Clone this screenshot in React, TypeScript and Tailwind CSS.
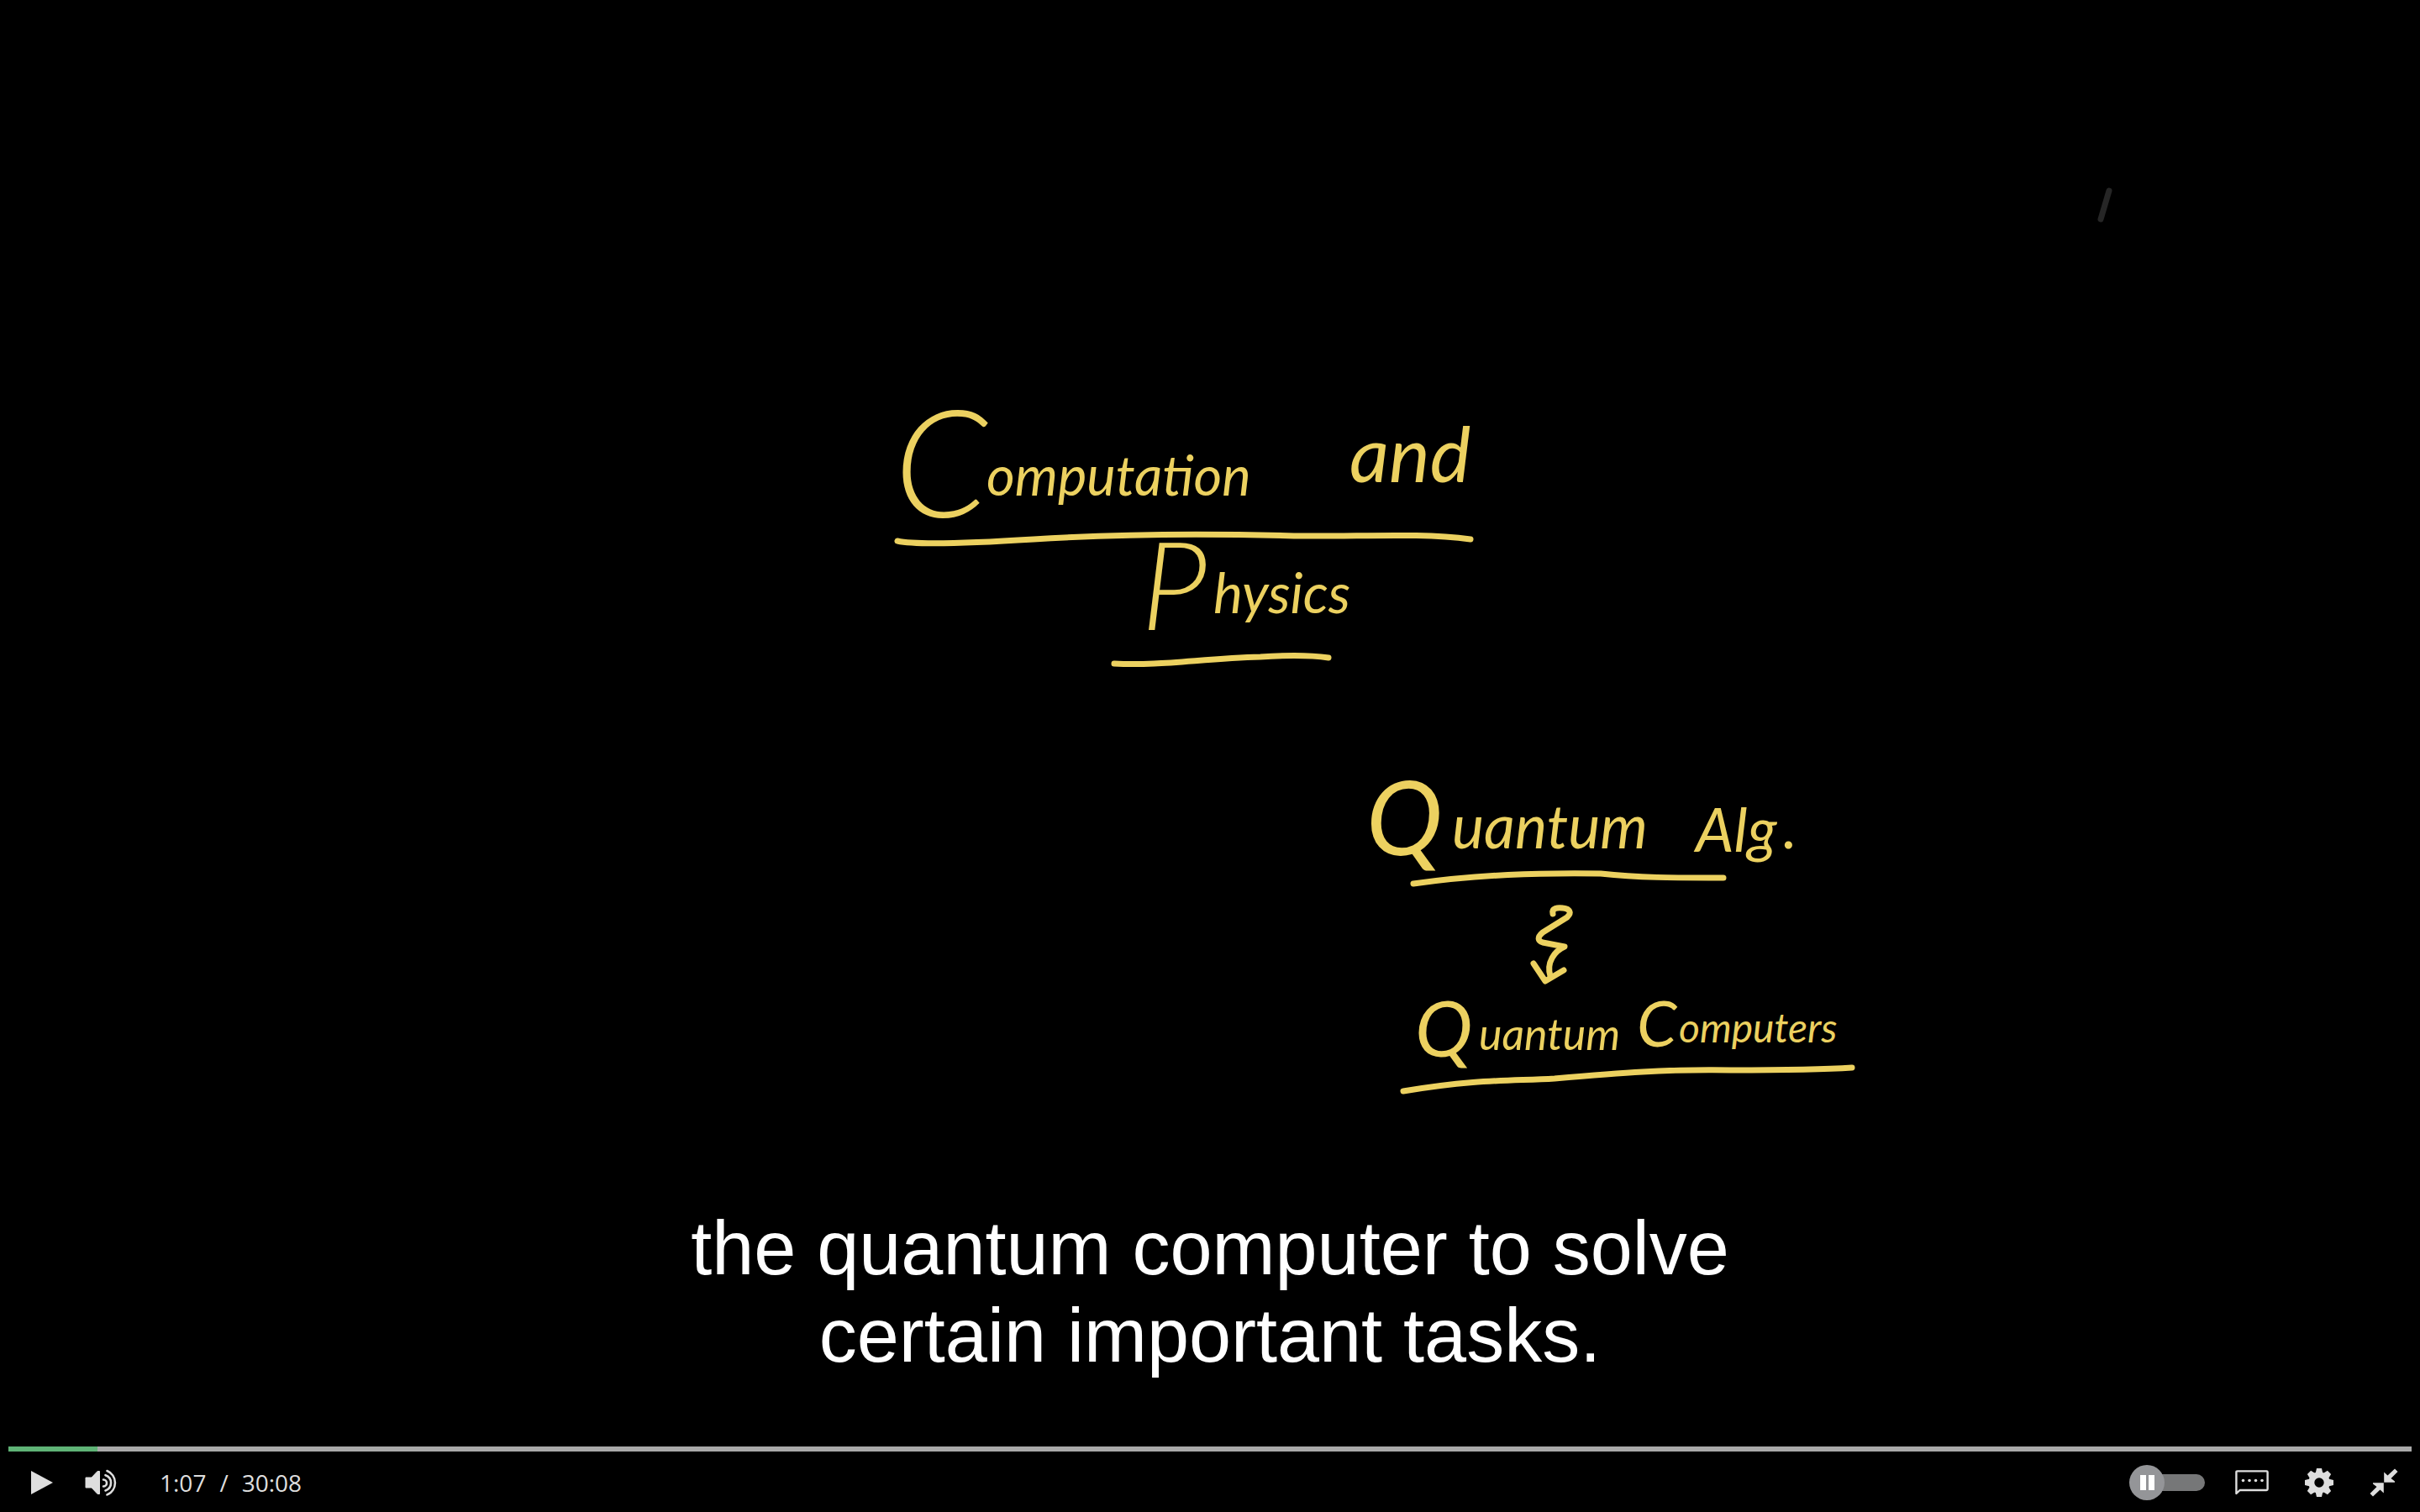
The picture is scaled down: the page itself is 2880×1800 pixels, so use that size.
const INK = "#ecd160";

function Handwriting() {
  return (
    <svg
      viewBox="0 0 2880 1800"
      preserveAspectRatio="xMidYMid meet"
      className="absolute inset-0 size-full font-['Lato',sans-serif] italic"
      role="img"
      aria-label="Lecture notes: Computation and Physics, Quantum Alg., Quantum Computers"
    >
      <g fill={INK}>
        <text x="1064" y="616" fontSize="178" fontWeight="300">
          C<tspan x="1174" y="590" fontSize="65" fontWeight="400">omputation</tspan>
        </text>
        <text x="1606" y="574" fontSize="92">and</text>
        <text x="1358" y="750" fontSize="146" fontWeight="300">
          P<tspan x="1444" y="730" fontSize="66" fontWeight="400">hysics</tspan>
        </text>
        <text x="1626" y="1018" fontSize="122">
          Q<tspan x="1728" y="1010" fontSize="72">uantum</tspan>
        </text>
        <text x="2018" y="1014" fontSize="72">
          Alg<tspan x="2122" y="1010">.</tspan>
        </text>
        <text x="1684" y="1258" fontSize="92">
          Q<tspan x="1760" y="1250" fontSize="52">uantum</tspan>
        </text>
        <text x="1948" y="1246" fontSize="76">
          C<tspan x="1998" y="1241" fontSize="48">omputers</tspan>
        </text>
      </g>
      <g fill="none" stroke={INK} strokeWidth="7" strokeLinecap="round" strokeLinejoin="round">
        <path d="M1068 644C1090 649 1150 647 1230 642C1340 635 1440 635 1540 638C1620 639 1690 634 1750 642" />
        <path d="M1326 790C1380 793 1430 784 1500 782C1530 780 1560 780 1581 783" />
        <path d="M1682 1052C1760 1041 1830 1039 1905 1040C1950 1045 1990 1045 2051 1045" />
        <path d="M1670 1299C1760 1284 1800 1287 1850 1284C1930 1277 1980 1273 2060 1274C2120 1274 2160 1274 2204 1271" />
        <path d="M1848 1088C1846 1081 1854 1080 1860 1081C1868 1082 1871 1086 1865 1092L1836 1110C1829 1116 1830 1120 1836 1122L1862 1127C1850 1132 1840 1146 1845 1162" />
        <path d="M1825 1147L1839 1168L1861 1155" />
      </g>
      <path d="M2510 227L2500 261" stroke="#262626" strokeWidth="7" strokeLinecap="round" />
    </svg>
  );
}

function PlayIcon() {
  return (
    <svg viewBox="0 0 26 28" className="h-7 w-[26px]" fill="currentColor" aria-hidden="true">
      <path d="M0 0L26 14L0 28Z" />
    </svg>
  );
}

function VolumeIcon() {
  return (
    <svg viewBox="0 0 38 32" className="h-8 w-[38px]" fill="none" stroke="currentColor" aria-hidden="true">
      <path d="M1 10H8L15 2.5H17.5V29.5H15L8 22H1Z" fill="currentColor" strokeWidth="1" strokeLinejoin="round" />
      <path
        d="M22 12.5A4 4 0 0 1 22 20.5M24.5 7.2A9.6 9.6 0 0 1 24.5 25.4M26.5 2A15.4 15.4 0 0 1 26.5 30.4"
        strokeWidth="2.6"
        strokeLinecap="round"
      />
    </svg>
  );
}

function CaptionsIcon() {
  return (
    <svg viewBox="0 0 40 30" className="h-[30px] w-10" fill="none" stroke="currentColor" aria-hidden="true">
      <path
        d="M1.4 28V2.6Q1.4 1.4 2.6 1.4H37.4Q38.6 1.4 38.6 2.6V22.8Q38.6 24 37.4 24H5.6Z"
        strokeWidth="2.4"
        strokeLinejoin="round"
      />
      <g fill="currentColor" stroke="none">
        <circle cx="9.5" cy="12.5" r="1.8" />
        <circle cx="17" cy="12.5" r="1.8" />
        <circle cx="24.5" cy="12.5" r="1.8" />
        <circle cx="32" cy="12.5" r="1.8" />
      </g>
    </svg>
  );
}

function GearIcon() {
  return (
    <svg viewBox="-17 -17 34 34" className="size-[34px]" fill="currentColor" aria-hidden="true">
      <circle r="9.2" fill="none" stroke="currentColor" strokeWidth="7" />
      {[0, 45, 90, 135, 180, 225, 270, 315].map((a) => (
        <path key={a} d="M-4.4 -11L-3 -17H3L4.4 -11Z" transform={`rotate(${a})`} />
      ))}
    </svg>
  );
}

function ShrinkIcon() {
  return (
    <svg viewBox="0 0 34 34" className="size-[34px]" fill="currentColor" aria-hidden="true">
      <path d="M17.2 16.8V4.5L21.5 8.5L30 0.5L33.5 4L25.5 12L30 15.5V16.8Z" />
      <path d="M16.8 17.2V29.5L12.5 25.5L4 33.5L0.5 30L8.5 22L4 18.5V17.2Z" />
    </svg>
  );
}

export default function App() {
  const elapsed = 67;
  const duration = 1808;
  return (
    <main className="relative flex min-h-screen flex-col justify-end overflow-hidden bg-black font-['Open_Sans',sans-serif]">
      <Handwriting />
      <p className="relative mb-20 text-center font-['Liberation_Sans',sans-serif] text-[90px] leading-[104px] text-white">
        the quantum computer to solve
        <br />
        certain important tasks.
      </p>
      <div className="relative px-2.5">
        <div
          role="progressbar"
          aria-label="Playback position"
          aria-valuemin={0}
          aria-valuemax={duration}
          aria-valuenow={elapsed}
          className="h-1.5 bg-[#a9a9a9]"
        >
          <div className="h-full bg-[#5fb376]" style={{ width: `${(elapsed / duration) * 100}%` }} />
        </div>
      </div>
      <div className="relative flex h-[72px] items-center justify-between pt-0.5 pr-[26px] pl-[37px] text-[#dedede]">
        <div className="flex items-center">
          <button type="button" aria-label="Play">
            <PlayIcon />
          </button>
          <button type="button" aria-label="Mute" className="ml-[38px]">
            <VolumeIcon />
          </button>
          <div className="ml-[51px] flex gap-4 text-[28px] leading-8">
            <span>1:07</span>
            <span>/</span>
            <span>30:08</span>
          </div>
        </div>
        <div className="flex items-center">
          <button type="button" role="switch" aria-checked="false" aria-label="Autoplay" className="flex items-center">
            <span className="relative flex size-[42px] items-center justify-center gap-[3px] rounded-full bg-[#949598]">
              <span className="h-[18px] w-[7px] bg-white" />
              <span className="h-[18px] w-[7px] bg-white" />
            </span>
            <span className="-ml-1 h-5 w-[52px] rounded-r-full bg-[#767778]" />
          </button>
          <button type="button" aria-label="Captions" className="ml-9">
            <CaptionsIcon />
          </button>
          <button type="button" aria-label="Settings" className="ml-[43px]">
            <GearIcon />
          </button>
          <button type="button" aria-label="Exit full screen" className="ml-[43px]">
            <ShrinkIcon />
          </button>
        </div>
      </div>
    </main>
  );
}
